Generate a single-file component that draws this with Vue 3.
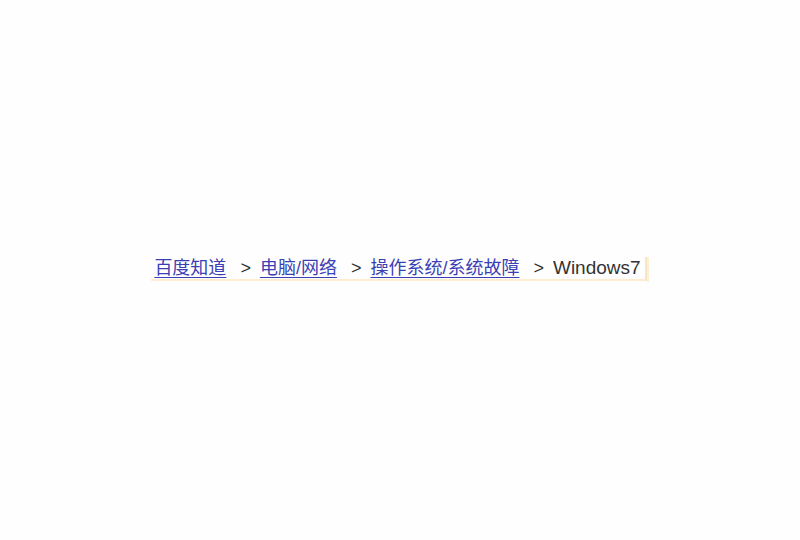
<template>
  <div class="page">
    <nav class="crumbs" aria-label="breadcrumb">
      <div class="trail">
        <template v-for="item in links" :key="item">
          <a href="#" class="crumb">{{ item }}</a>
          <span class="sep">&gt;</span>
        </template>
        <span class="current">Windows7</span>
      </div>
    </nav>
  </div>
</template>

<script setup>
const links = ['百度知道', '电脑/网络', '操作系统/系统故障'];
</script>

<style>
body {
  background: #fefefe;
}
</style>

<style scoped>
.page {
  display: flex;
  justify-content: center;
  align-items: center;
  box-sizing: border-box;
  min-height: 100vh;
  padding-bottom: 2px;
}

.crumbs {
  padding-bottom: 1px;
  border-right: 2px solid #fdefd6;
  font-family: "Liberation Sans", "Noto Sans CJK SC", sans-serif;
  font-size: 18px;
  line-height: 22px;
  color: #333;
  white-space: nowrap;
}

.trail {
  display: flex;
  align-items: center;
  padding: 0 4px 0 3px;
  border-right: 2px solid #fbe6c2;
  border-bottom: 2px solid #fcecd0;
}

.crumb {
  color: #3a3fb5;
  text-decoration: underline;
  text-decoration-thickness: 1px;
  text-underline-offset: 3px;
}

.sep {
  margin: 0 9px 0 14px;
}

.current {
  font-size: 19px;
}
</style>
